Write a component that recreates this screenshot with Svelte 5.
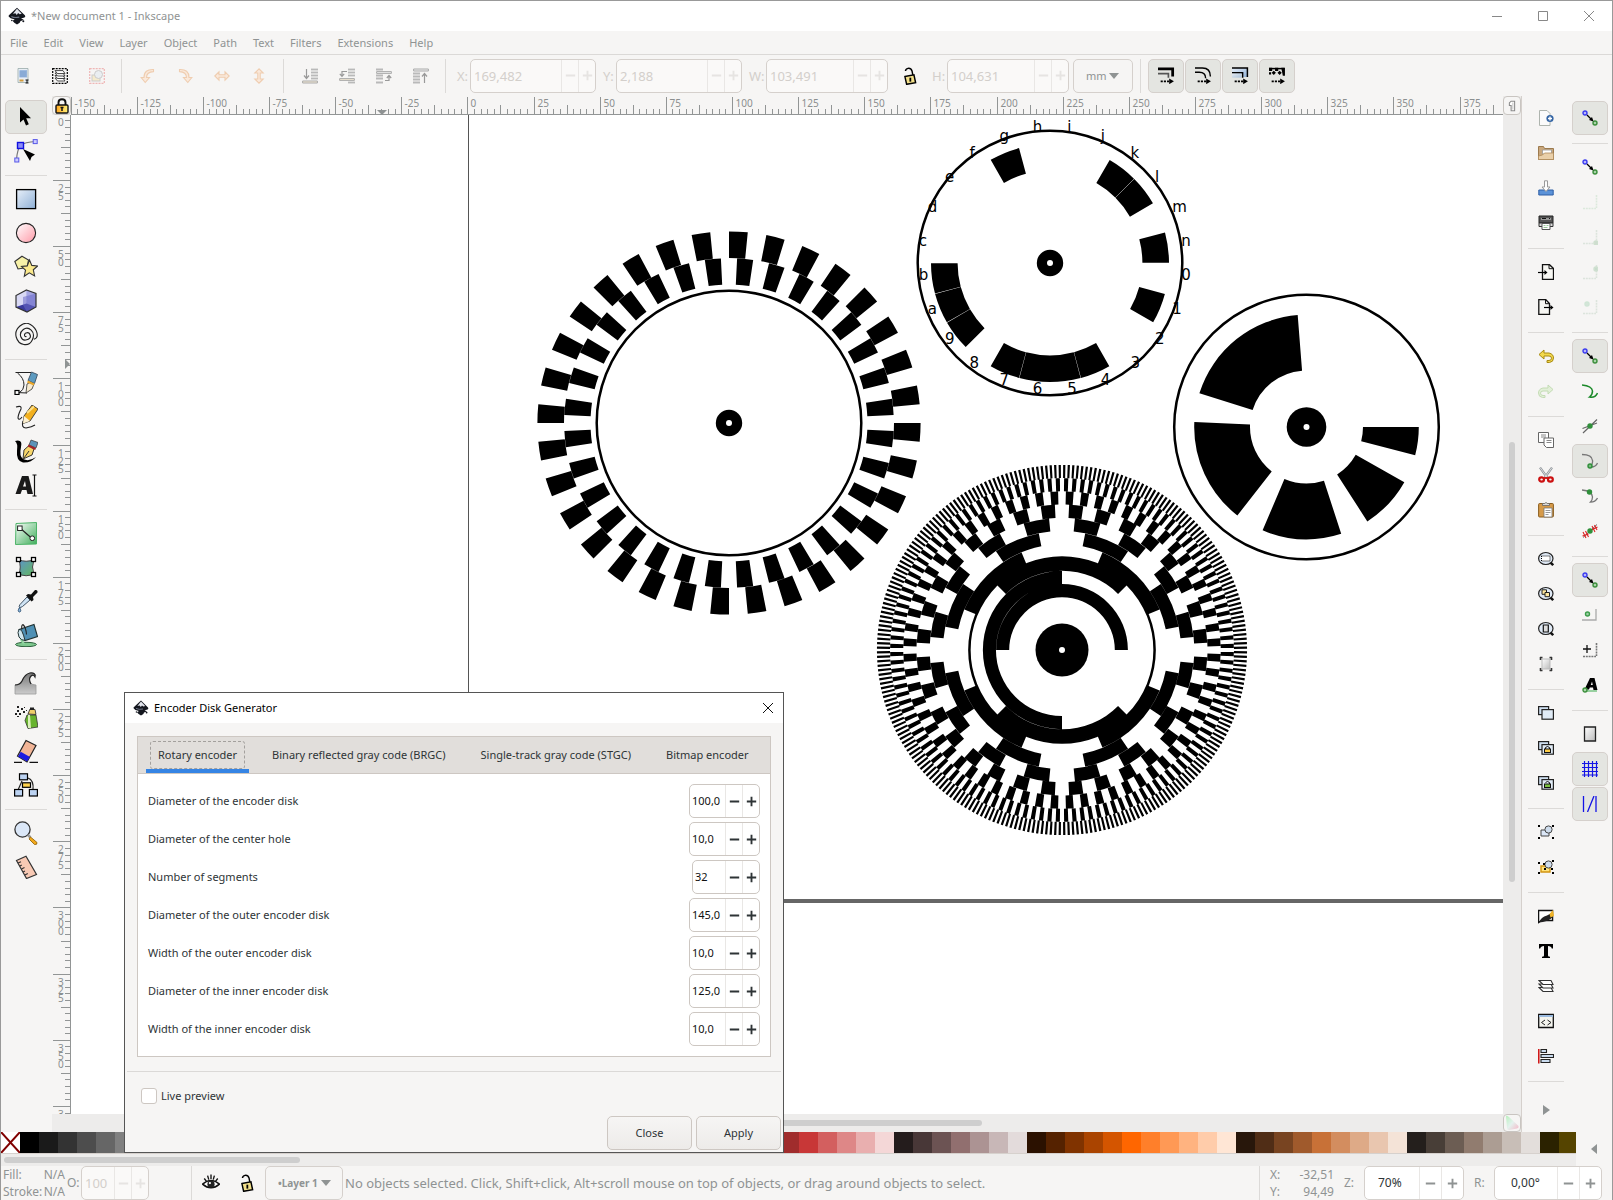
<script>
  const menus = ['File', 'Edit', 'View', 'Layer', 'Object', 'Path', 'Text', 'Filters', 'Extensions', 'Help'];

  const topGroups = [
    ['selectAll', 'selectLayers', 'deselect'],
    ['rotateLeft', 'rotateRight', 'flipH', 'flipV'],
    ['toBottom', 'lower', 'raise', 'toTop']
  ];
  const scaleModes = ['scaleStroke', 'scaleCorners', 'scaleGradient', 'scalePattern'];

  const toolGroups = [
    ['select', 'node'],
    ['rect', 'ellipse', 'star', 'box3d', 'spiral'],
    ['pen', 'pencil', 'calligraphy', 'text'],
    ['gradient', 'mesh', 'dropper', 'bucket'],
    ['tweak', 'spray', 'eraser', 'connector'],
    ['zoom', 'measure']
  ];

  const commandGroups = [
    ['docNew', 'folder', 'save', 'print'],
    ['import', 'export'],
    ['undo', 'redo'],
    ['copy', 'cut', 'paste'],
    ['zoomSel', 'zoomDraw', 'zoomPage', 'zoomWidth'],
    ['duplicate', 'clone', 'unlink'],
    ['group', 'ungroup'],
    ['fillStroke', 'textDlg', 'layers', 'xml', 'align']
  ];
  const snapGroups = [
    [['snap', 1]],
    [['snap', 0], ['bbox', 0], ['bboxCorner', 0], ['bboxMid', 0], ['bboxCenter', 0]],
    [['snap', 1], ['snapPath', 0], ['snapCross', 0], ['snapCusp', 1], ['snapSmooth', 0], ['snapMid', 0]],
    [['snap', 1], ['snapObj', 0], ['snapRot', 0], ['snapText', 0]],
    [['page', 0], ['grid', 1], ['guide', 1]]
  ];

  const swatches = (
    '000000 1a1a1a 333333 4d4d4d 666666 808080 999999 b3b3b3 cccccc e6e6e6 ececec f2f2f2 f9f9f9 ffffff ' +
    '800000 ff0000 808000 ffff00 008000 00ff00 008080 00ffff 000080 0000ff 800080 ff00ff ' +
    '2b0000 550000 800000 aa0000 d40000 ff0000 ff2a2a ff5555 ff8080 ffaaaa ffd5d5 ' +
    '280b0b 501616 782121 a02c2c c83737 d35f5f de8787 e9afaf f4d7d7 ' +
    '241c1c 483737 6c5353 916f6f ac9393 c8b7b7 e3dbdb ' +
    '2b1100 552200 803300 aa4400 d45500 ff6600 ff7f2a ff9955 ffb380 ffccaa ffe6d5 ' +
    '28170b 502d16 784421 a05a2c c87137 d38d5f deaa87 e9c6af f4e3d7 ' +
    '241f1c 483e37 6c5d53 917c6f ac9d93 c8beb7 e3dedb 2b2200 554400 806600 aa8800 d4aa00'
  ).split(' ').map((c) => '#' + c);

  const tabs = ['Rotary encoder', 'Binary reflected gray code (BRGC)', 'Single-track gray code (STGC)', 'Bitmap encoder'];
  let activeTab = $state(0);
  const fields = [
    ['Diameter of the encoder disk', '100,0'],
    ['Diameter of the center hole', '10,0'],
    ['Number of segments', '32'],
    ['Diameter of the outer encoder disk', '145,0'],
    ['Width of the outer encoder disk', '10,0'],
    ['Diameter of the inner encoder disk', '125,0'],
    ['Width of the inner encoder disk', '10,0']
  ];

  // Rulers: ten minor ticks for every 25 mm at 70 % zoom
  let workW = $state(1469);
  let workH = $state(1035);
  const step = 6.614;
  const hTicks = $derived(
    Array.from({ length: Math.max(0, Math.floor((workW - 37) / step)) }, (_, k) => {
      const i = k - 60;
      return { x: Math.floor(396.9 + i * step) + 0.5, top: i % 10 === 0 ? 1 : i % 5 === 0 ? 9 : 13, label: i % 10 === 0 ? String(i * 2.5) : null };
    })
  );
  const vTicks = $derived(
    Array.from({ length: Math.max(0, Math.floor((workH - 37) / step)) + 1 }, (_, i) => ({
      y: Math.round(-1.2 + i * step) + 0.5,
      left: i % 10 === 0 ? 1 : i % 5 === 0 ? 9 : 13,
      label: i % 10 === 0 ? String(i * 2.5).split('') : null
    }))
  );

  // Annular sector, angles in degrees clockwise from the x axis
  function sector(r0, r1, a0, a1) {
    const p = (r, a) => `${(r * Math.cos((a * Math.PI) / 180)).toFixed(2)} ${(r * Math.sin((a * Math.PI) / 180)).toFixed(2)}`;
    const big = a1 - a0 > 180 ? 1 : 0;
    return `M${p(r1, a0)}A${r1} ${r1} 0 ${big} 1 ${p(r1, a1)}L${p(r0, a1)}A${r0} ${r0} 0 ${big} 0 ${p(r0, a0)}Z`;
  }
  const rotary = Array.from({ length: 32 }, (_, k) =>
    sector(165, 191.6, k * 11.25, k * 11.25 + 5.625) + sector(138.5, 164.8, k * 11.25 + 2.8125, k * 11.25 + 8.4375)
  ).join('');
  const bitmap = [[15, 30], [60, 75], [75, 105], [105, 120], [135, 150], [150, 165], [165, 180], [240, 255], [300, 315], [315, 330], [345, 360]]
    .map(([a, b]) => sector(92.4, 119, a + 0.1, b - 0.1)).join('');
  const single = [[0, 14.6], [29.4, 57.2], [72, 113], [128, 182.6], [197.5, 265.5]]
    .map(([a, b]) => sector(56.5, 112.3, a, b)).join('');
  const gray = Array.from({ length: 10 }, (_, k) => {
    const r0 = 52.8 + k * 13.24, r1 = r0 + 13.1;
    if (k === 0) return sector(r0, r1, 180, 359.99);
    const n = 2 ** (k - 1);
    return Array.from({ length: n }, (_, j) => sector(r0, r1, (90 + 360 * j) / n, (270 + 360 * j) / n)).join('');
  }).join('');
  const letters = '0123456789abcdefghijklmn'.split('').map((c, i) => {
    const a = ((i + 0.5) * Math.PI) / 12;
    return { c, x: 132.3 * Math.cos(a), y: 132.3 * Math.sin(a) };
  });

  const snapDot = (x, y, c, f) => `<circle cx="${x}" cy="${y}" r="2" fill="${f}" stroke="${c}" stroke-width="1.4"/>`;
  const lens = (inner) => `<ellipse cx="7.8" cy="7.5" rx="7.2" ry="6" fill="#dfe9f5" stroke="#222" stroke-width="1.2"/><path d="M12.6 11.6l2.600 2.600" stroke="#111" stroke-width="2.6"/>${inner}`;
  const twoPages = '<rect x=".6" y="1.6" width="10" height="8" fill="#cfdff0" stroke="#222" stroke-width="1.2"/><rect x="4" y="4.6" width="11.4" height="9.6" fill="#e0ebf6" stroke="#222" stroke-width="1.2"/>';
  const dashes = (c) => `<path d="M1 14.5h13M14.5 1v13" stroke="${c}" stroke-width="1.6" stroke-dasharray="2 .8" fill="none"/>`;
  const bars = (ys) => ys.map((y) => `<path d="M9 ${y}h7" stroke="#b9b9b9" stroke-width="1.8"/>`).join('');
  const dashArrow = '<path d="M2.500 13.500h8" stroke="#000" stroke-width="1.6" stroke-dasharray="2 1"/><path d="M10.500 10.800l4.500 2.700-4.500 2.700z" fill="#000"/>';

  const icons = {
    logo: '<path d="M8 .6 15 7.4Q16 8.6 14.6 9.4L11.6 10.2 14 11.4 11 12.6 10.4 14 8 15.6 5.6 14 4 12.2 6 11 2.4 10 .8 8.6Q0 7.8 1 7Z" fill="#14171f"/><path d="M8 1.6 12.2 6 10.4 6.4 9 5.4 7.8 7 6.6 5.6 4.4 6Z" fill="#e3e6ee"/><path d="M3 8.4q3 1.6 7 .6" stroke="#6d7485" fill="none"/><circle cx="13.6" cy="12.6" r=".9" fill="#14171f"/><circle cx="3.4" cy="12" r=".7" fill="#14171f"/>',
    selectAll: '<path d="M3 .5h10v14H3z" fill="#e8eef5" stroke="#9aa" stroke-width=".8"/><path d="M4.500 2h7.500v7.500H4.500z" fill="#9ebbe0"/><path d="M4.500 4h7M4.500 6h7M4.500 8h7" stroke="#6b93c8" stroke-width=".8"/><path d="M4.500 11.500h4v2h-4z" fill="#d39b3a"/><path d="M10.500 12h3M10.500 15h3M12 12v3" stroke="#111"/>',
    selectLayers: '<rect x=".7" y=".7" width="14.600" height="14.600" fill="none" stroke="#000" stroke-width="1.200" stroke-dasharray="2 1"/><g fill="#fff" stroke="#333" stroke-width=".9"><path d="M3 10l2.500 3H13l-2-3z"/><path d="M3 7.500l2.500 3H13l-2-3z"/><path d="M3 5l2.500 3H13l-2-3z"/><path d="M3 2.600l2.500 3H13l-2-3z"/></g>',
    deselect: '<g opacity=".45"><rect x=".7" y=".7" width="14.600" height="14.600" fill="none" stroke="#e86a6a" stroke-width="1.200" stroke-dasharray="2 1"/><rect x="3" y="7" width="8" height="6" fill="#f5dfa0" stroke="#999"/><circle cx="9.500" cy="6.500" r="4" fill="#dde6ee" stroke="#999"/></g>',
    rotateLeft: '<path d="M13.500 1.500Q4 1 4 9.500H1.200L5.200 14.500 9.500 9.500H6.500Q6.500 4 13.500 3.600z" fill="#fae9db" stroke="#efcdb0" stroke-width="1.100"/>',
    rotateRight: '<path d="M2.500 1.500Q12 1 12 9.500H14.800L10.800 14.500 6.500 9.500H9.500Q9.500 4 2.500 3.600z" fill="#fae9db" stroke="#efcdb0" stroke-width="1.100"/>',
    flipH: '<path d="M.8 8 5 3.800V6.800h6V3.800L15.200 8 11 12.200V9.200H5v3z" fill="#fae9db" stroke="#efcdb0" stroke-width="1.100"/>',
    flipV: '<path d="M8 .8 3.800 5H6.800v6H3.800L8 15.200 12.200 11H9.200V5h3z" fill="#fae9db" stroke="#efcdb0" stroke-width="1.100"/>',
    toBottom: bars([1.5, 4.5, 7.5, 10.5]) + '<path d="M.6 13h14.800v2H.6z" fill="#f4ead6" stroke="#aaa"/><path d="M4.500 1v9M2 7.500l2.500 3 2.500-3" stroke="#999" fill="none" stroke-width="1.200"/>',
    lower: bars([1.5, 4.5, 7.5, 14.5]) + '<path d="M.6 10.600h14.800v1.800H.6z" fill="#f4ead6" stroke="#aaa"/><path d="M8 3.500H3V8M.800 5.800L3 8.300l2.200-2.500" stroke="#999" fill="none" stroke-width="1.200"/>',
    raise: '<path d="M0 1.500h7M0 7.500h7M0 10.500h7M0 14.500h7" stroke="#b9b9b9" stroke-width="1.800"/><path d="M.6 3.600h14.800v1.800H.6z" fill="#eee" stroke="#aaa"/><path d="M9 12.500h4V8M10.800 10L13 7.500l2.200 2.500" stroke="#999" fill="none" stroke-width="1.200"/>',
    toTop: '<path d="M0 5.500h7M0 8.500h7M0 11.500h7M0 14.500h7" stroke="#b9b9b9" stroke-width="1.800"/><path d="M.6 1h14.800v2H.6z" fill="#eee" stroke="#aaa"/><path d="M11.500 15V6M9 8.500l2.500-3 2.500 3" stroke="#999" fill="none" stroke-width="1.200"/>',
    scaleStroke: '<path d="M0 1.800h13.800V9" fill="none" stroke="#000" stroke-width="2.600"/><path d="M0 6.300h9.800V10" fill="none" stroke="#555" stroke-width="1.600"/>' + dashArrow,
    scaleCorners: '<path d="M0 1h7q7.500 0 7.500 8" fill="none" stroke="#000" stroke-width="1.300"/><path d="M0 5h4q6 0 6 5.500" fill="none" stroke="#000" stroke-width="1.300"/>' + dashArrow,
    scaleGradient: '<path d="M0 1h14.500v8.500h-4V6H0z" fill="url(#blueFill)"/><path d="M0 1h14.500v8.500M0 5.500h10V10" fill="none" stroke="#000" stroke-width="1.400"/><path d="M0 6h9v4H0z" fill="url(#blueFill)" opacity=".7"/>' + dashArrow,
    scalePattern: '<path d="M0 1.500h14.500" stroke="#000" stroke-width="1.400"/><path d="M0 .8h3v3H0zM5.700.8h3v3h-3zM11.500.8h3.500v7.500h-2zM2.500 5.500l2-2 2 2-2 2zM8 5.500l2-2 2 2-2 2zM0 5h2v2H0z" fill="#000"/>' + dashArrow,
    unlock: '<path d="M3.500 8.500 11.500 7 13 14 5 15.400z" fill="#f3e08a" stroke="#000" stroke-width="1.300"/><path d="M10.500 7 9.800 3.500Q8.800.800 6.200 1.200 4 1.800 4 3.500" fill="none" stroke="#000" stroke-width="1.300"/><path d="M8.300 9.500v3.500" stroke="#000" stroke-width="1.600"/>',
    lockClosed: '<path d="M4.500 7V4.500Q4.500 1.200 8 1.200t3.500 3.300V7" fill="none" stroke="#111" stroke-width="1.900"/><rect x="2" y="7" width="12" height="8" rx="1" fill="url(#goldFill)" stroke="#111" stroke-width="1.400"/><path d="M6.500 9.500h3M8 9v4" stroke="#111" stroke-width="1.500"/>',
    handLock: '<path d="M5 4.500 7 2.500h4v11H7V7.500H5z" fill="#fff" stroke="#8a8a8a" stroke-width="1.200"/><path d="M9 4v8" stroke="#bbb"/>',
    colorManage: '<path d="M2 1Q3 0 5 2L14.500 11Q15 13 13 13.500L5 15Q3 15 3 13z" fill="url(#triFill)"/>',
    eye: '<path d="M.5 9Q8 2.500 15.500 9 8 15.500.5 9z" fill="#fff" stroke="#111" stroke-width="1.300"/><circle cx="8" cy="9" r="3.200" fill="#222"/><circle cx="7" cy="8" r="1" fill="#fff"/><path d="M2 4l2 2.500M5 1.500l1 3.500M8 .5v4M11 1.500l-1 3.500M14 4l-2 2.500" stroke="#111" stroke-width="1.200"/>',

    select: '<path d="M6 2V17.500L9.500 14.500 12 20.500 14.800 19.200 12.200 13.300H17z" fill="#000"/>',
    node: '<path d="M2.500 21Q3 11 6.500 6.500 11 3 21.500 2.500" fill="none" stroke="#777" stroke-width="1.200"/><path d="M9 10 21 15.500 17.500 18 16 22z" fill="#000"/><rect x="3.500" y="3.500" width="6" height="6" fill="#8c8cf5" stroke="#1010e0" stroke-width="1.400"/><rect x=".800" y="19" width="4" height="4" fill="#ccf" stroke="#5858e8"/><rect x="19.200" y=".600" width="4" height="4" fill="#ccf" stroke="#5858e8"/>',
    rect: '<rect x="2.600" y="2.600" width="19" height="19" fill="url(#blueFill)" stroke="#000" stroke-width="1.300"/>',
    ellipse: '<circle cx="12" cy="12" r="9.600" fill="url(#pinkFill)" stroke="#222" stroke-width="1.100"/>',
    star: '<path d="M8 1.200 14.500 5 13 12.500 4 14 .8 6.500z" fill="#f7f1a8" stroke="#333" stroke-width="1.100"/><path d="M15.500 5l2.300 5.400 5.800.6-4.300 3.800 1.300 6.200-5.300-3.200-5 3.400 1.200-6L7.500 11.500l5.700-.6z" fill="#fbe98c" stroke="#333" stroke-width="1.100"/>',
    box3d: '<path d="M12.500 1 22 4.500V18L13 23 2 18V6.500z" fill="#c2c2ec"/><path d="M12.500 1V14.500L2 18V6.500z" fill="#d9d9f4"/><path d="M12.500 1 22 4.500V18L12.500 14.500z" fill="#a5a5e2"/><path d="M2 18 12.500 14.500 22 18 13 23z" fill="#3a3a9c"/><path d="M9 8 22 4.500V18L13 23 9 16z" fill="#6c6cc8" opacity=".55"/><path d="M12.500 1 22 4.500V18L13 23 2 18V6.500z" fill="none" stroke="#333" stroke-width="1.200"/>',
    spiral: '<path d="M12.500 13.500q-2 .5-2-1.500t2.500-2.300 3.300 2.800-3.600 4.300-5.900-3 2.500-7.300 7.900.6 1.200 9.600-8.600 4.800-7.600-7.500 3.700-11 10.500-1.500 6.500 8.200-3 6.600" fill="none" stroke="#222" stroke-width="1.100"/>',
    pen: '<path d="M1.500 1.500H17M3.500 2q6.500 5 6.500 12 0 5-5 8M2.500 21.500 13 22" fill="none" stroke="#222"/><rect x="1" y="19.500" width="4" height="4" fill="#fff" stroke="#000" stroke-width="1.200"/><path d="M12 22l1-9 4-2 3 2-2 5z" fill="#f6ead0" stroke="#333" stroke-width=".8"/><path d="M14 9.500 17.500 1l6 2.500-3 9z" fill="#5c9ac0" stroke="#345" stroke-width=".8"/><path d="M14 9.500l6.500 3-.8 2-6.700-3z" fill="#e9a72c"/>',
    pencil: '<path d="M2 2q6-2 5 2-3 6-3 9 1 3 4-1M9 16q-2 7 3 7 6-1 9-3" fill="none" stroke="#222" stroke-width="1.100"/><path d="M9 18.500 10 11 18 0l6 4-8 12z" fill="#f2b01e" stroke="#333" stroke-width=".9"/><path d="M9 18.500 10 11l6 5z" fill="#fbf0d2"/><path d="M13 8 20 1.500" stroke="#fbe08a" stroke-width="2"/>',
    calligraphy: '<path d="M1 2Q9 0 7 8q-2 9 2 12 6 3 13-2-5 6-13 5.500Q2 22 3 12 4 4 1 2z" fill="#000"/><path d="M9 20l1-9 5-4.500 5 3.500-2 6z" fill="#f6d66b" stroke="#222" stroke-width=".9"/><path d="M10 19l5-7" stroke="#333"/><path d="M15 6l2-5 7 2.500-2 5.500z" fill="#5c93b8" stroke="#333" stroke-width=".7"/><path d="M14.600 5.500 22 9l-.8 2-7.600-3.500z" fill="#a3252a"/>',
    text: '<path d="M1.500 21 8 3h6.500L19 21h-5.500l-1-4H8l-1.500 4zM9 13.500h3L11 8z" fill="#1a1a1a"/><path d="M18.500 2h4M18.500 23h4M20.500 2v21" stroke="#111" stroke-width="1.200"/>',
    gradient: '<path d="M2 2.500 22.500 1.500V23L1.500 23.500z" fill="url(#greenFill)" stroke="#4db468"/><path d="M6 7 18 17.500" stroke="#222" stroke-width="1.200"/><rect x="3.600" y="5" width="4.500" height="4.500" fill="#fff" stroke="#222"/><rect x="16" y="15" width="4.500" height="4.500" rx="2" fill="#fff" stroke="#222"/>',
    mesh: '<path d="M4.500 4.500Q12 8 20 4.500 17 12 20 19.500 12 22 4.500 19.500 8 12 4.500 4.500z" fill="url(#meshFill)" stroke="#444"/><g fill="#fff" stroke="#000" stroke-width="1.300"><rect x="2.500" y="2.500" width="4" height="4"/><rect x="17.500" y="2.500" width="4" height="4"/><rect x="2.500" y="17.500" width="4" height="4"/><rect x="17.500" y="17.500" width="4" height="4"/></g>',
    dropper: '<path d="M13 8 6 15.500q-1.500 2-.5 3 1.500 0 3-1L16 11z" fill="#cfe3f4" stroke="#456" /><path d="M12 6.500l2-1.500 3 .5L21 1q3-.5 2.500 2.500L19 8l.5 3-2 1.500z" fill="#111"/><path d="M5.500 18.500q-2.500 4 0 4.500 2.500-.5 0-4.500z" fill="#8bb8e0" stroke="#357"/>',
    bucket: '<ellipse cx="12" cy="21.500" rx="10.500" ry="2.200" fill="#7fc98f" stroke="#2c5f3c"/><path d="M6 10q-1 6 1.500 9.500 2 3 3.500 1Q8 17 9 11z" fill="#8fd3a0"/><path d="M5 6.500 20 1.500l3.500 12L11 17.500z" fill="#4f90b4" stroke="#233" stroke-width="1.100"/><path d="M5 6.500q3-1.500 6 11-4 0-6-3.500-2-5 0-7.500z" fill="#cfe6ee" stroke="#233"/><path d="M9 1.500q3 3 3.500 10M9 1.500q-2 1-1 5" fill="none" stroke="#222" stroke-width="1.100"/>',
    tweak: '<path d="M1 23V14q5 0 7-4Q11 3 16 2q5-.500 6 3-3-2-5 0-3 3-1 6 1 3 6 3v9z" fill="url(#waveFill)" stroke="#999" stroke-width=".8"/><path d="M1 14q5 0 7-4Q11 3 16 2q6-.500 5 4-1.500-3-4-1-3 3 0 8" fill="none" stroke="#222" stroke-width="1.200"/>',
    spray: '<path d="M13 10h9l2 12-10 1.500-3-8z" fill="#67b32e" stroke="#333" stroke-width=".8"/><path d="M14 10v13l3 .3L16 10z" fill="#d9f0b8"/><path d="M14 9 16 4l5 .5 1 5z" fill="#f0cf6a" stroke="#222" stroke-width=".8"/><path d="M16 2.500h4v2.500h-4z" fill="#222"/><path d="M3 1h2v2H3zM7 3h2v2H7zM3 5h2v2H3zM9 6h2v2H9zM5 8h2v2H5zM1 8h2v2H1zM3 11h2v1H3zM10 2h1v1h-1zM12 5h1v1h-1z" fill="#222"/>',
    eraser: '<path d="M12 1.500 22 6.500 13 23 3.500 17z" fill="#f1b496" stroke="#222" stroke-width="1.200"/><path d="M6.700 12.800 16 18l-3 4.500-9-5z" fill="#1b1be0"/><path d="M0 23.300h8M15.500 23.300H24" stroke="#111" stroke-width="1.200"/>',
    connector: '<path d="M8 8 4 17M14 5q6 2 5 12" fill="none" stroke="#222" stroke-width="1.200"/><g fill="#bcd3f2" stroke="#000" stroke-width="1.200"><rect x="5.500" y=".8" width="8" height="6"/><rect x=".6" y="16.500" width="8" height="6.500"/><rect x="15.400" y="16.500" width="8" height="6.500"/></g><rect x="8.500" y="9.800" width="8" height="4.500" fill="#ffd34d" stroke="#000" stroke-width="1.200"/>',
    zoom: '<circle cx="8.500" cy="8.500" r="7.600" fill="#dbe7f7" stroke="#333" stroke-width="1.300"/><path d="M14 14l2.500 2.500" stroke="#999" stroke-width="2.500"/><path d="M16.500 16 23 21.500q.5 2.500-2.500 2L15 18z" fill="#f3a91b" stroke="#8a5a00" stroke-width=".8"/>',
    measure: '<path d="M2.500 5.500 12 1.200 22.500 19.500 12.500 23.500z" fill="#f8c9b4" stroke="#333" stroke-width="1.200"/><path d="M4 8l3-1.300M5.800 11l2-1M7.500 14l3-1.500M9 17l2-1M10.800 20l3-1.500" stroke="#333" stroke-width="1.200"/>',

    docNew: '<path d="M1.500.5h7.500l3 3v12H1.500z" fill="#fbfbfb" stroke="#aeb4ae"/><circle cx="12" cy="8.500" r="3.600" fill="#3465a4"/><path d="M12 6.500v4M10 8.500h4" stroke="#fff" stroke-width="1.400"/>',
    folder: '<path d="M.5 1.500h5l1 2h9v11H.5z" fill="#c9a77c" stroke="#9c7a4e"/><path d="M4.500 5h9v4h-9z" fill="#fff" stroke="#999" stroke-width=".8"/><path d="M.5 14.500V11l4-1 2-2h9v6.500z" fill="#e9cfa9" stroke="#b08c5c" stroke-width=".8"/>',
    save: '<path d="M.8 10h14.400v5H.8z" fill="#5b92d8" stroke="#2f5fa5"/><path d="M6.500.800h3V7h2.500L8 11.500 4 7h2.500z" fill="#fdfdfd" stroke="#999"/>',
    print: '<path d="M1 1h14v7H1z" fill="#555" stroke="#222"/><path d="M3 3h10v2H3z" fill="#999"/><path d="M4 3.500h4M11 3.500h1" stroke="#111" stroke-width="1.200"/><path d="M1 8h14v3.500H1z" fill="#d8d8d8" stroke="#333"/><path d="M4 8.500h8v6H4z" fill="#fff" stroke="#555"/><path d="M5.500 10.500h2M8.500 10.500h2M5.500 12.500h4" stroke="#9ac79a"/>',
    import: '<path d="M4.500.700h7l4 3.800V15.300H4.500z" fill="#f7f7f3" stroke="#111" stroke-width="1.300"/><path d="M11 .700v4h4" fill="none" stroke="#111"/><path d="M0 8.500h8" stroke="#000" stroke-width="1.200"/><path d="M6.500 6l3 2.500-3 2.500z" fill="#000"/>',
    export: '<path d="M.8.700h7l3.700 3.800V15.300H.8z" fill="#f7f7f3" stroke="#111" stroke-width="1.300"/><path d="M7.500.700v4h4" fill="none" stroke="#111"/><path d="M6 8.500h8" stroke="#000" stroke-width="1.200"/><path d="M12.500 6l3 2.500-3 2.500z" fill="#000"/>',
    undo: '<path d="M6 2 1 6.500 6 11V8h5q2.500 0 2.500 2.200T11 12.500H9V14.500h2.500Q15.500 14 15.500 10T11 5H6z" fill="#f2d84d" stroke="#a88a12"/>',
    redo: '<path d="M10 2l5 4.500L10 11V8H5Q2.500 8 2.500 10.200T5 12.500H7V14.500H4.500Q.5 14 .5 10T5 5h5z" fill="#e2efd8" stroke="#c4dcb4"/>',
    copy: '<g fill="#fff" stroke="#666"><path d="M.5.500h10v10H.5z"/><path d="M6 6h9.500v9.500H8.500L6 13z"/></g><path d="M3 3h5M3 5h5M8.500 8.500h5M8.500 10.500h5" stroke="#888"/>',
    cut: '<path d="M2 .5 9.500 11M14 .5 6.500 11" stroke="#8d9399" stroke-width="2.200"/><path d="M2 .5 9.500 11M14 .5 6.500 11" stroke="#eee" stroke-width=".8"/><g fill="none" stroke="#cc1111" stroke-width="2.200"><ellipse cx="3.600" cy="12.500" rx="2.400" ry="2.200"/><ellipse cx="12.400" cy="12.500" rx="2.400" ry="2.200"/></g><path d="M6 11h4" stroke="#c11" stroke-width="1.800"/>',
    paste: '<rect x=".6" y="1.500" width="14.800" height="13.500" rx="1" fill="#d69a49" stroke="#8a5d1e"/><path d="M4.500 3.500V1.500h2Q8-.500 9.500 1.500h2v2z" fill="#ddd" stroke="#666" stroke-width=".8"/><path d="M6 6h8v9H6z" fill="#fff" stroke="#777" stroke-width=".8"/><path d="M7.500 8.500h5M7.500 10.500h5M7.500 12.500h3" stroke="#999"/>',
    zoomSel: lens('<rect x="3.500" y="5" width="8.500" height="5" fill="#fff" stroke="#000" stroke-dasharray="1 1"/>'),
    zoomDraw: lens('<g fill="#ffe9a0" stroke="#222"><path d="M4 3.800h4.500v4.500H4z"/><path d="M7 6.500h4.500v4.200H7z"/></g>'),
    zoomPage: lens('<path d="M5.300 4h5v7h-5z" fill="#ddd" stroke="#111" stroke-width="1.200"/>'),
    zoomWidth: '<path d="M4 3h8v10H4z" fill="url(#pageFill)" stroke="#bbb"/><path d="M2 1.500h2.500M2.500 1v3M14 1.500h-2.500M13.500 1v3M2 14.500h2.500M2.500 15v-3M14 14.500h-2.500M13.500 15v-3" stroke="#333" stroke-width="1.600"/>',
    duplicate: twoPages,
    clone: twoPages + '<rect x="6.500" y="9" width="6" height="3.500" fill="#ffcf4a" stroke="#111"/><path d="M7.500 9V7.500q2-2 4 0V9" fill="none" stroke="#111"/>',
    unlink: twoPages + '<rect x="6.500" y="9" width="6" height="3.500" fill="#7cc142" stroke="#111"/><path d="M7.500 7.500q2-2 4 0V9" fill="none" stroke="#111"/>',
    group: '<path d="M3 6h8v6H3z" fill="#dbe7f7" stroke="#444"/><circle cx="10.500" cy="5.500" r="3.600" fill="#cfdded" stroke="#444"/><path d="M0 1h2v2H0zM14 1h2v2h-2zM0 13h2v2H0zM14 13h2v2h-2zM3 13h1M12 2h1" fill="#000"/>',
    ungroup: '<path d="M3 7h9v6H3z" fill="#ffe27a" stroke="#d29410" stroke-width="1.400"/><circle cx="10.500" cy="5.500" r="3.600" fill="#cfdded" stroke="#444"/><path d="M0 3h2v2H0zM14 1h2v2h-2zM0 13h2v2H0zM14 13h2v2h-2zM5 4h2v2H5zM13 9h2v2h-2zM6 9h2v2H6z" fill="#000"/>',
    fillStroke: '<path d="M.600 2.500h14v10h-11l-3 2z" fill="#fff" stroke="#111" stroke-width="1.300"/><path d="M1 14.500Q3 9 9 7.500l5.600-3v5Q9 14 1 14.500z" fill="#222"/><path d="M11.500 6l3.500-4 1 6-3.500 1.500z" fill="#f0b429"/>',
    textDlg: '<path d="M1 1h14v4.500h-1.200Q13.300 3 10 3v9.500q0 1.200 2 1.200V15H4v-1.300q2 0 2-1.200V3Q2.700 3 2.200 5.500H1z" fill="#000"/>',
    layers: '<g fill="#fff" stroke="#333" stroke-width="1.100"><path d="M1 9.500l4 4h10l-2-4z"/><path d="M1 6l4 4h10l-2-4z"/><path d="M1 2.500l4 4h10l-2-4z"/></g>',
    xml: '<path d="M.7 1.500h14.600v13H.7z" fill="#f4f4ee" stroke="#111" stroke-width="1.300"/><path d="M1 2h14v2H1z" fill="#9bbbe0"/><path d="M7 7l-3.500 2.500L7 12M9.500 7l3.500 2.500L9.500 12" fill="none" stroke="#222"/>',
    align: '<path d="M.8 1v14.500" stroke="#c00" stroke-width="1.400"/><g fill="#c9dbee" stroke="#222" stroke-width="1.100"><path d="M3 1.500h5.500v3H3z"/><path d="M3 6.500h12.500v3H3z"/><path d="M3 11.500h9v3H3z"/></g>',

    snap: snapDot(3, 3, '#3a3af0', '#b6b6f8') + snapDot(13, 13, '#3c8f3c', '#a9d3a9') + '<path d="M5 5l5 5" stroke="#000" stroke-width="1.300"/><path d="M11.500 11.500 7 10l3-3z" fill="#000"/>',
    bbox: dashes('#dce9dc'),
    bboxCorner: dashes('#dce4dc') + snapDot(14, 14, '#cfe0cf', '#cfdccf'),
    bboxMid: dashes('#dce4dc') + snapDot(14, 5, '#cfe0d0', '#c8dccb'),
    bboxCenter: dashes('#dce4dc') + snapDot(5, 5, '#cfe5d5', '#d4e4d8'),
    snapPath: '<path d="M0 2q10 1 10.500 6 0 4-3 6 6 1 8-4" fill="none" stroke="#1c8a2a" stroke-width="1.500"/>',
    snapCross: '<path d="M.5 10.500 15 5M1 15 15 1.500" stroke="#666" stroke-width="1.200"/>' + snapDot(8, 8, '#2f8f3a', '#2f8f3a'),
    snapCusp: '<path d="M0 1.500q10 0 10.500 6Q11 10 9 13M9 14q5 0 6.500-4" fill="none" stroke="#777" stroke-width="1.300"/>' + snapDot(8, 13, '#2f8f3a', '#7ab980'),
    snapSmooth: '<path d="M0 2q10 1 10.500 7 0 3-2 5 5 0 7-4" fill="none" stroke="#777" stroke-width="1.300"/>' + snapDot(7.5, 4, '#2f8f3a', '#2f8f3a'),
    snapMid: '<path d="M1 14.500 15 1.500" stroke="#666"/><path d="M1 9l3 6M3.500 8l3 6M.5 13l6-2M10 3l3 6M12.500 2l2.500 5M9.500 7l6-3" stroke="#d22" stroke-width="1.100"/>' + snapDot(8, 8, '#2f8f3a', '#2f8f3a'),
    snapObj: '<path d="M0 13h14V2" fill="none" stroke="#aaa" stroke-width="1.300"/>' + snapDot(5.5, 7, '#3c9c4a', '#9fd0a6'),
    snapRot: dashes('#777') + '<path d="M1 7h8M5 3v8" stroke="#111" stroke-width="1.300"/>',
    snapText: '<path d="M2.500 12.500 8 1h4.500l3 12h-4l-.5-2.500H7.800L7 12.500zM8.800 8h2L10 4.500z" fill="#000"/><path d="M3 14h12" stroke="#5ab868" stroke-width="1.200"/>' + snapDot(3, 13, '#3c8f3c', '#a9d3a9'),
    page: '<path d="M2.500 1h11v14h-11z" fill="url(#pageFill)" stroke="#222" stroke-width="1.300"/>',
    grid: '<path d="M2.500 0v16M6.500 0v16M10.500 0v16M14.500 0v16M0 2.500h16M0 6.500h16M0 10.500h16M0 14h16" stroke="#1414e6" stroke-width="1.200"/>',
    guide: '<path d="M1.500 0v16M14 0v16M5.500 16 12 0" stroke="#1414e6" stroke-width="1.300"/>',
    minus: '<path d="M3 8h10" stroke="currentColor" stroke-width="2"/>',
    plus: '<path d="M3 8h10M8 3v10" stroke="currentColor" stroke-width="2"/>'
  };
</script>

{#snippet icon(name, size = 16)}
  <svg width={size} height={size} viewBox={size === 24 ? '0 0 24 24' : '0 0 16 16'} aria-hidden="true">{@html icons[name]}</svg>
{/snippet}

{#snippet spin(id, value, kind)}
  <div class="spin {kind}">
    <input {id} type="text" {value} />
    <button aria-label="Decrease">{@render icon('minus', 15)}</button>
    <button aria-label="Increase">{@render icon('plus', 15)}</button>
  </div>
{/snippet}

<div class="app">
  <header class="titlebar">
    {@render icon('logo', 18)}
    <h1>*New document 1 - Inkscape</h1>
    <div class="wincontrols">
      <button aria-label="Minimize"><svg width="12" height="12"><path d="M1 6.500h10" /></svg></button>
      <button aria-label="Maximize"><svg width="12" height="12"><path d="M1.500 1.500h9v9h-9z" /></svg></button>
      <button aria-label="Close window"><svg width="12" height="12"><path d="M1 1l10 10M11 1L1 11" /></svg></button>
    </div>
  </header>

  <nav class="menubar">
    {#each menus as m}<button>{m}</button>{/each}
  </nav>

  <div class="toolbar">
    {#each topGroups as g}
      {#each g as name}<button class="tb" aria-label={name}>{@render icon(name)}</button>{/each}
      <span class="vsep"></span>
    {/each}
    <div class="coords">
      <label for="cx">X:</label>{@render spin('cx', '169,482', 'dim wide')}
      <label for="cy">Y:</label>{@render spin('cy', '2,188', 'dim wide')}
      <label for="cw">W:</label>{@render spin('cw', '103,491', 'dim')}
      <button class="locker" aria-label="Lock ratio">{@render icon('unlock', 18)}</button>
      <label for="ch">H:</label>{@render spin('ch', '104,631', 'dim')}
    </div>
    <div class="combo unit">
      <select aria-label="Unit"><option>mm</option></select>
      <svg width="10" height="6"><path d="M0 0h10L5 6z" /></svg>
    </div>
    <span class="vsep tight"></span>
    <div class="toggles">
      {#each scaleModes as name}<button class="on" aria-label={name}>{@render icon(name, 17)}</button>{/each}
    </div>
  </div>

  <main>
    <div class="tools">
      {#each toolGroups as g, gi}
        {#if gi}<hr />{/if}
        {#each g as name}<button class:on={name === 'select'} aria-label={name}>{@render icon(name, 24)}</button>{/each}
      {/each}
    </div>

    <div class="work" bind:clientWidth={workW} bind:clientHeight={workH}>
      <button class="corner" aria-label="Lock guides">{@render icon('lockClosed')}</button>
      <svg class="hruler">
        {#each hTicks as t}
          <path d="M{t.x} {t.top}V18" />
          {#if t.label}<text x={t.x + 3} y="11">{t.label}</text>{/if}
        {/each}
        <path class="mark" d="M306 14h10l-5 5z" />
      </svg>
      <button class="corner" aria-label="Sticky zoom">{@render icon('handLock', 14)}</button>

      <svg class="vruler">
        {#each vTicks as t}
          <path d="M{t.left} {t.y}H18" />
          {#if t.label}{#each t.label as ch, j}{#if t.y + 4 + j * 8 < workH - 37}<text x="6" y={t.y + 11 + j * 8}>{ch}</text>{/if}{/each}{/if}
        {/each}
        <path class="mark" d="M13 244v10l5-5z" />
      </svg>

      <svg class="canvas">
        <defs>
          <linearGradient id="blueFill" x2="1" y2="1"><stop stop-color="#e8f0fa" /><stop offset="1" stop-color="#8fb0d6" /></linearGradient>
          <linearGradient id="pinkFill" x2="1" y2="1"><stop stop-color="#fff" /><stop offset="1" stop-color="#ff9aa8" /></linearGradient>
          <linearGradient id="greenFill" x2="1" y2="1"><stop stop-color="#fff" /><stop offset="1" stop-color="#3fae5a" /></linearGradient>
          <linearGradient id="meshFill" x2="1" y2="1"><stop stop-color="#5c93cc" /><stop offset="1" stop-color="#63b85c" /></linearGradient>
          <linearGradient id="waveFill" x2="0" y2="1"><stop stop-color="#777" /><stop offset="1" stop-color="#ccc" /></linearGradient>
          <linearGradient id="goldFill" x2="1" y2="0"><stop stop-color="#ffa51e" /><stop offset="1" stop-color="#fff27a" /></linearGradient>
          <linearGradient id="pageFill" x2="1" y2="1"><stop stop-color="#fff" /><stop offset="1" stop-color="#bbb" /></linearGradient>
          <linearGradient id="triFill" x2="1" y2="1"><stop stop-color="#b9f0bd" /><stop offset=".5" stop-color="#e4f2ee" /><stop offset="1" stop-color="#f5b8c8" /></linearGradient>
        </defs>
        <path d="M397.500 0V788" stroke="#555" />
        <rect x="397" y="784" width="100%" height="4" fill="#666" />
        <g transform="translate(658 308)">
          <path d={rotary} />
          <circle class="rim" r="132.300" /><circle r="13.200" /><circle class="hole" r="3" />
        </g>
        <g transform="translate(979 148)">
          <path d={bitmap} />
          <circle class="rim" r="132.300" /><circle r="13.200" /><circle class="hole" r="3" />
          {#each letters as l}<text x={l.x} y={l.y}>{l.c}</text>{/each}
        </g>
        <g transform="translate(1235.500 312)">
          <path d={single} />
          <circle class="rim" r="132.300" /><circle r="19.800" /><circle class="hole" r="3" />
        </g>
        <g transform="translate(991 535)">
          <path d={gray} />
          <circle class="rim" r="92.600" /><circle r="26.500" /><circle class="hole" r="3" />
        </g>
      </svg>
      <div class="vscroll"><span></span></div>
      <span></span>
      <div class="hscroll"><span></span></div>
      <button class="corner" aria-label="Color management">{@render icon('colorManage')}</button>
    </div>

    <div class="side">
      <div class="col">
        {#each commandGroups as g}
          {#each g as name}<button aria-label={name}>{@render icon(name)}</button>{/each}
          <hr />
        {/each}
        <button class="more" aria-label="More commands"><svg width="7" height="10"><path d="M0 0v10l7-5z" /></svg></button>
      </div>
      <div class="col">
        {#each snapGroups as g, gi}
          {#if gi}<hr />{/if}
          {#each g as [name, on]}<button class:on={on === 1} aria-label={name}>{@render icon(name)}</button>{/each}
        {/each}
      </div>
    </div>
  </main>

  <div class="palette">
    <div class="strip">
      <div class="swatches">
        <button class="none" aria-label="No paint"><svg width="19" height="21"><path d="M0 0L19 21M19 0L0 21" /></svg></button>
        {#each swatches as c}<button aria-label={c} style:background={c}></button>{/each}
      </div>
      <div class="pscroll"><span></span></div>
    </div>
    <button class="pmenu" aria-label="Palette menu"><svg width="6" height="10"><path d="M6 0v10L0 5z" /></svg></button>
  </div>

  <footer>
    <dl class="paint"><dt>Fill:</dt><dd>N/A</dd><dt>Stroke:</dt><dd>N/A</dd></dl>
    <label for="op">O:</label>{@render spin('op', '100', 'dim small')}
    <span class="fsep"></span>
    <button class="fbtn" aria-label="Layer visibility">{@render icon('eye', 18)}</button>
    <button class="fbtn" aria-label="Layer lock">{@render icon('unlock', 18)}</button>
    <div class="combo layer">
      <select aria-label="Layer"><option>•Layer 1</option></select>
      <svg width="10" height="6"><path d="M0 0h10L5 6z" /></svg>
    </div>
    <p>No objects selected. Click, Shift+click, Alt+scroll mouse on top of objects, or drag around objects to select.</p>
    <dl class="pos"><dt>X:</dt><dd>-32,51</dd><dt>Y:</dt><dd>94,49</dd></dl>
    <label for="zm">Z:</label>{@render spin('zm', '70%', 'zoomer')}
    <label for="rt">R:</label>{@render spin('rt', '0,00°', 'zoomer rot')}
  </footer>

  <div class="dialog" role="dialog" aria-label="Encoder Disk Generator">
    <div class="dtitle">
      {@render icon('logo', 16)}
      <h2>Encoder Disk Generator</h2>
      <button aria-label="Close dialog"><svg width="12" height="12"><path d="M1 1l10 10M11 1L1 11" /></svg></button>
    </div>
    <div class="notebook">
      <div class="tabs" role="tablist">
        {#each tabs as t, i}
          <button role="tab" aria-selected={i === activeTab} class:active={i === activeTab} onclick={() => (activeTab = i)}><span>{t}</span></button>
        {/each}
      </div>
      <div class="fields">
        {#each fields as [name, value], i}
          <div class="field">
            <label for="f{i}">{name}</label>
            {@render spin('f' + i, value, i === 2 ? 'num int' : 'num')}
          </div>
        {/each}
      </div>
    </div>
    <hr />
    <label class="live"><input type="checkbox" />Live preview</label>
    <div class="actions"><button>Close</button><button>Apply</button></div>
  </div>
</div>

<style>
  :global(body) { margin: 0; }
  .app, .app * { box-sizing: border-box; }
  .app {
    position: relative; display: flex; flex-direction: column; min-height: 100vh;
    border: 1px solid #999; background: #f6f5f4; color: #8f9393;
    font: 12px/16px "Noto Sans", "Open Sans", sans-serif; overflow: hidden;
  }
  button { padding: 0; border: 0; background: none; font: inherit; color: inherit; display: flex; align-items: center; justify-content: center; flex-shrink: 0; }
  svg { display: block; flex-shrink: 0; }
  h1, h2, p, dl, dd { margin: 0; font-weight: 400; font-size: 12px; }
  input, select { font: inherit; color: inherit; min-width: 0; }
  .on { background: #e4e5e1; border: 1px solid #d5d0cc; border-radius: 5px; }

  .titlebar { display: flex; align-items: center; height: 30px; background: #fff; padding-left: 7px; gap: 5px; }
  .titlebar h1 { flex: 1; font-size: 11px; }
  .wincontrols { display: flex; }
  .wincontrols button { width: 46px; height: 30px; }
  .wincontrols path, .dtitle button path { fill: none; stroke: #888; }

  .menubar { display: flex; gap: 16px; height: 24px; padding: 0 9px; border-bottom: 1px solid #dbd9d7; font-size: 11px; }

  .toolbar { display: flex; align-items: center; height: 41px; padding: 0 3px; }
  .tb { width: 37px; height: 34px; }
  .vsep { width: 1px; height: 34px; margin: 0 7px 0 6px; background: #dcdad8; }
  .vsep.tight { margin: 0 7px; }
  .coords { display: flex; align-items: center; color: #d3cfcb; padding-left: 4px; font-size: 13px; }
  .coords label { width: 13px; }
  .coords label:nth-of-type(3) { width: 17px; }
  .coords label:nth-of-type(4) { width: 15px; }
  .locker { width: 36px; height: 34px; margin-right: 4px; }
  .toggles { display: flex; gap: 1px; }
  .toggles button { width: 36px; height: 34px; }

  .spin { display: flex; height: 34px; border: 1px solid #d5d0cc; border-radius: 5px; background: #fff; overflow: hidden; }
  .spin input { flex: 1; width: 0; border: 0; background: none; padding: 0 0 0 3px; outline: none; }
  .spin button { width: 17px; border-left: 1px solid #e9e7e5; }
  .spin.dim { width: 122px; background: #faf9f8; color: #d3cfcb; margin-right: 4px; }
  .spin.dim.wide { width: 126px; margin-right: 7px; }
  .spin.dim.small { width: 68px; margin-right: 0; font-size: 13px; }
  .spin.dim button { color: #e6e4e2; }

  .combo { display: grid; align-items: center; height: 34px; border: 1px solid #d5d0cc; border-radius: 5px; }
  .combo select { grid-area: 1 / 1; height: 32px; appearance: none; border: 0; background: none; outline: none; }
  .combo svg { grid-area: 1 / 1; justify-self: end; fill: #8f9393; pointer-events: none; }
  .unit { width: 60px; }
  .unit select { padding: 0 0 0 12px; font-size: 11px; }
  .unit svg { margin-right: 13px; }

  main { flex: 1; display: flex; min-height: 0; }
  .tools { width: 51px; padding: 4px 4px 0; }
  .tools button { width: 42px; height: 34px; }
  .tools hr { height: 1px; margin: 7px 0 6px; border: 0; background: #dcdad8; width: 42px; }

  .work { flex: 1; min-width: 0; display: grid; grid-template: 19px 1fr 18px / 19px 1fr 18px; background: #edeceb; }
  .work > .corner { background: #f6f5f4; border: 1px solid #c9c5c1; border-radius: 4px; }
  .hruler, .vruler { width: 100%; height: 100%; overflow: hidden; background: #f6f5f4; }
  .hruler { border-bottom: 1px solid #929595; }
  .vruler { border-right: 1px solid #929595; }
  .hruler path, .vruler path { stroke: #929595; }
  .hruler .mark, .vruler .mark { fill: #8f9393; stroke: none; }
  .hruler text, .vruler text { font-size: 10px; fill: #8b8f8f; }
  .canvas { width: 100%; height: 100%; background: #fff; overflow: hidden; }
  .canvas .rim { fill: none; stroke: #000; stroke-width: 2.500px; }
  .canvas .hole { fill: #fff; }
  .canvas text { font: 15px "DejaVu Sans", sans-serif; }
  .vscroll { padding: 327px 6px 0; }
  .vscroll span { display: block; height: 440px; border-radius: 3px; background: #cecece; }
  .hscroll { padding: 6px 0 0 410px; }
  .hscroll span { display: block; width: 501px; height: 6px; border-radius: 3px; background: #cecece; }

  .side { display: flex; gap: 8px; padding: 5px 4px 0 6px; border-left: 1px solid #d5d0cc; }
  .col { width: 36px; }
  .col button { width: 36px; height: 34px; margin-bottom: 1px; }
  .col hr { height: 1px; margin: 8px 0 6px; border: 0; background: #dcdad8; }
  .more svg, .pmenu svg { fill: #8f9393; }
  .col .more { height: 44px; margin: 0; }

  .palette { display: flex; }
  .strip { flex: 1; min-width: 0; background: #edeceb; }
  .swatches { display: flex; height: 22px; overflow: hidden; border-bottom: 1px solid #d6d1cd; }
  .swatches button { width: 19px; }
  .swatches .none { background: #fff; }
  .none path { stroke: #800000; stroke-width: 2; }
  .pscroll { height: 12px; padding: 3px 3px; }
  .pscroll span { display: block; width: 296px; height: 6px; border-radius: 3px; background: #cecece; }
  .pmenu { width: 36px; }

  footer { display: flex; align-items: center; height: 34px; }
  dl { display: grid; font-size: 12px; line-height: 17px; }
  dd { text-align: right; }
  .paint { width: 66px; grid-template-columns: 1fr auto; padding: 0 2px 0 2px; }
  footer > label { width: 14px; }
  .fsep { width: 1px; height: 34px; background: #dcdad8; margin: 0 1px 0 42px; }
  .fbtn { width: 36px; height: 34px; }
  .layer { width: 78px; }
  .layer select { font-size: 10px; font-weight: 700; padding-left: 12px; }
  .layer svg { margin-right: 11px; }
  footer p { flex: 1; min-width: 0; padding-left: 2px; font-size: 13px; white-space: nowrap; overflow: hidden; }
  .pos { grid-template-columns: 12px 52px; padding: 0 10px; border-left: 1px solid #dcdad8; }
  .spin.zoomer { width: 100px; margin: 0 10px 0 6px; color: #8f9393; }
  .spin.zoomer input { color: #2e3436; padding-left: 13px; }
  .spin.zoomer button { width: 22px; }
  .spin.rot { width: 108px; }
  .spin.rot input { padding-left: 16px; }

  .dialog {
    position: absolute; left: 123px; top: 691px; width: 660px;
    background: #f6f5f4; border: 1px solid #555; color: #2e3436; font-size: 11px; padding-bottom: 2px;
  }
  .dtitle { display: flex; align-items: center; height: 30px; background: #fff; padding: 0 9px 0 8px; gap: 5px; color: #000; }
  .dtitle h2 { flex: 1; font-size: 11px; }
  .dtitle button path { stroke: #111; }
  .notebook { margin: 13px 12px 14px; border: 1px solid #cdc7c2; background: #fff; }
  .tabs { display: flex; gap: 11px; height: 37px; padding: 0 8px; background: #e1dedb; border-bottom: 1px solid #cdc7c2; }
  .tabs button { padding: 4px 4px 0; align-items: flex-start; }
  .tabs span { padding: 5px 7px; border: 1px solid transparent; border-radius: 3px; height: 28px; }
  .tabs .active { box-shadow: inset 0 -4px #3584e4; }
  .tabs .active span { border: 1px dashed #a3a09d; }
  .fields { display: grid; gap: 4px; padding: 10px; }
  .field { display: flex; align-items: center; justify-content: space-between; }
  .spin.num { width: 71px; border-color: #cdc7c2; }
  .spin.num input { color: #111; padding-left: 2px; }
  .spin.int { width: 68px; }
  .dialog > hr { height: 1px; margin: 0 2px; border: 0; background: #dbd9d7; }
  .live { display: flex; align-items: center; gap: 4px; padding: 16px 16px 12px; width: max-content; }
  .live input { appearance: none; width: 16px; height: 16px; margin: 0; border: 1px solid #cdc7c2; border-radius: 3px; background: #fff; }
  .actions { display: flex; justify-content: flex-end; gap: 4px; padding-right: 2px; }
  .actions button { width: 85px; height: 34px; border: 1px solid #cdc7c2; border-radius: 5px; background: linear-gradient(#f6f5f4, #edebe9); }
</style>
